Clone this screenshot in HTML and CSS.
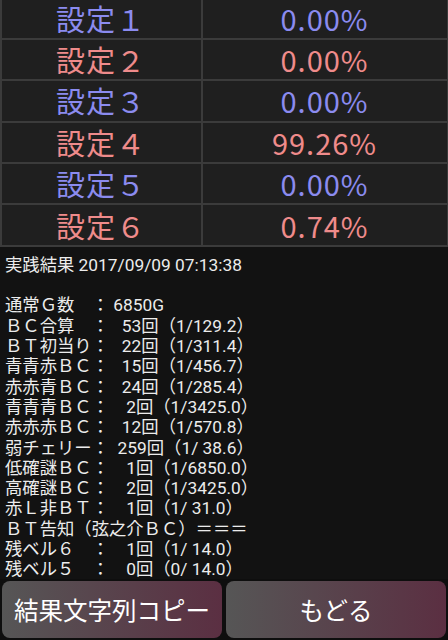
FILE: index.html
```html
<!DOCTYPE html>
<html lang="ja">
<head>
<meta charset="utf-8">
<title>設定判別結果</title>
<link rel="stylesheet" href="styles.css">
</head>
<body>
<div class="screen">
  <div class="table">
    <div class="cell blue">設定１</div><div class="cell blue">0.00%</div>
    <div class="cell red">設定２</div><div class="cell red">0.00%</div>
    <div class="cell blue">設定３</div><div class="cell blue">0.00%</div>
    <div class="cell red">設定４</div><div class="cell red">99.26%</div>
    <div class="cell blue">設定５</div><div class="cell blue">0.00%</div>
    <div class="cell red">設定６</div><div class="cell red">0.74%</div>
  </div>
  <div class="result"><pre class="log">実践結果 2017/09/09 07:13:38

通常Ｇ数　： 6850G
ＢＣ合算　：   53回（1/129.2）
ＢＴ初当り：   22回（1/311.4）
青青赤ＢＣ：   15回（1/456.7）
赤赤青ＢＣ：   24回（1/285.4）
青青青ＢＣ：    2回（1/3425.0）
赤赤赤ＢＣ：   12回（1/570.8）
弱チェリー：  259回（1/ 38.6）
低確謎ＢＣ：    1回（1/6850.0）
高確謎ＢＣ：    2回（1/3425.0）
赤Ｌ非ＢＴ：    1回（1/ 31.0）
ＢＴ告知（弦之介ＢＣ）＝＝＝
残ベル６　：    1回（1/ 14.0）
残ベル５　：    0回（0/ 14.0）
残ベル４　：    0回（0/ 14.0）</pre></div>
  <div class="buttons">
    <button class="btn">結果文字列コピー</button>
    <button class="btn">もどる</button>
  </div>
</div>
</body>
</html>
```
FILE: styles.css
```css
html, body {
  margin: 0;
  padding: 0;
  background: #121212;
}
.screen {
  width: 448px;
  height: 640px;
  display: flex;
  flex-direction: column;
  overflow: hidden;
  background: #121212;
}
.table {
  display: grid;
  grid-template-columns: 199px 1fr;
  grid-auto-rows: 39.4px;
  gap: 2px;
  padding: 0 1.5px 2px 1.5px;
  margin-top: -1.5px;
  background: #3b3b3b;
  flex: none;
}
.cell {
  background: #1f1f1f;
  display: flex;
  align-items: center;
  justify-content: center;
  font-family: "Noto Sans CJK JP", sans-serif;
  font-size: 29px;
  line-height: 1;
  letter-spacing: 1px;
}
.blue { color: #8b8bef; }
.red { color: #ef8b8b; }
.result {
  flex: 1;
  overflow: hidden;
  padding: 8px 0 0 5px;
}
.log {
  margin: 0;
  font-family: Roboto, "Noto Sans CJK JP", sans-serif;
  font-size: 17.33px;
  line-height: 20.3px;
  color: #ececec;
  white-space: pre;
}
.buttons {
  flex: none;
  display: flex;
  gap: 4px;
  padding: 2px;
  background: #0e0e0e;
}
.btn {
  flex: 1;
  height: 57px;
  border: none;
  border-radius: 8px;
  background: linear-gradient(to right, #565656, #5b2f42);
  color: #ffffff;
  font-family: "Noto Sans CJK JP", sans-serif;
  font-size: 24.5px;
  padding: 0;
}
```
